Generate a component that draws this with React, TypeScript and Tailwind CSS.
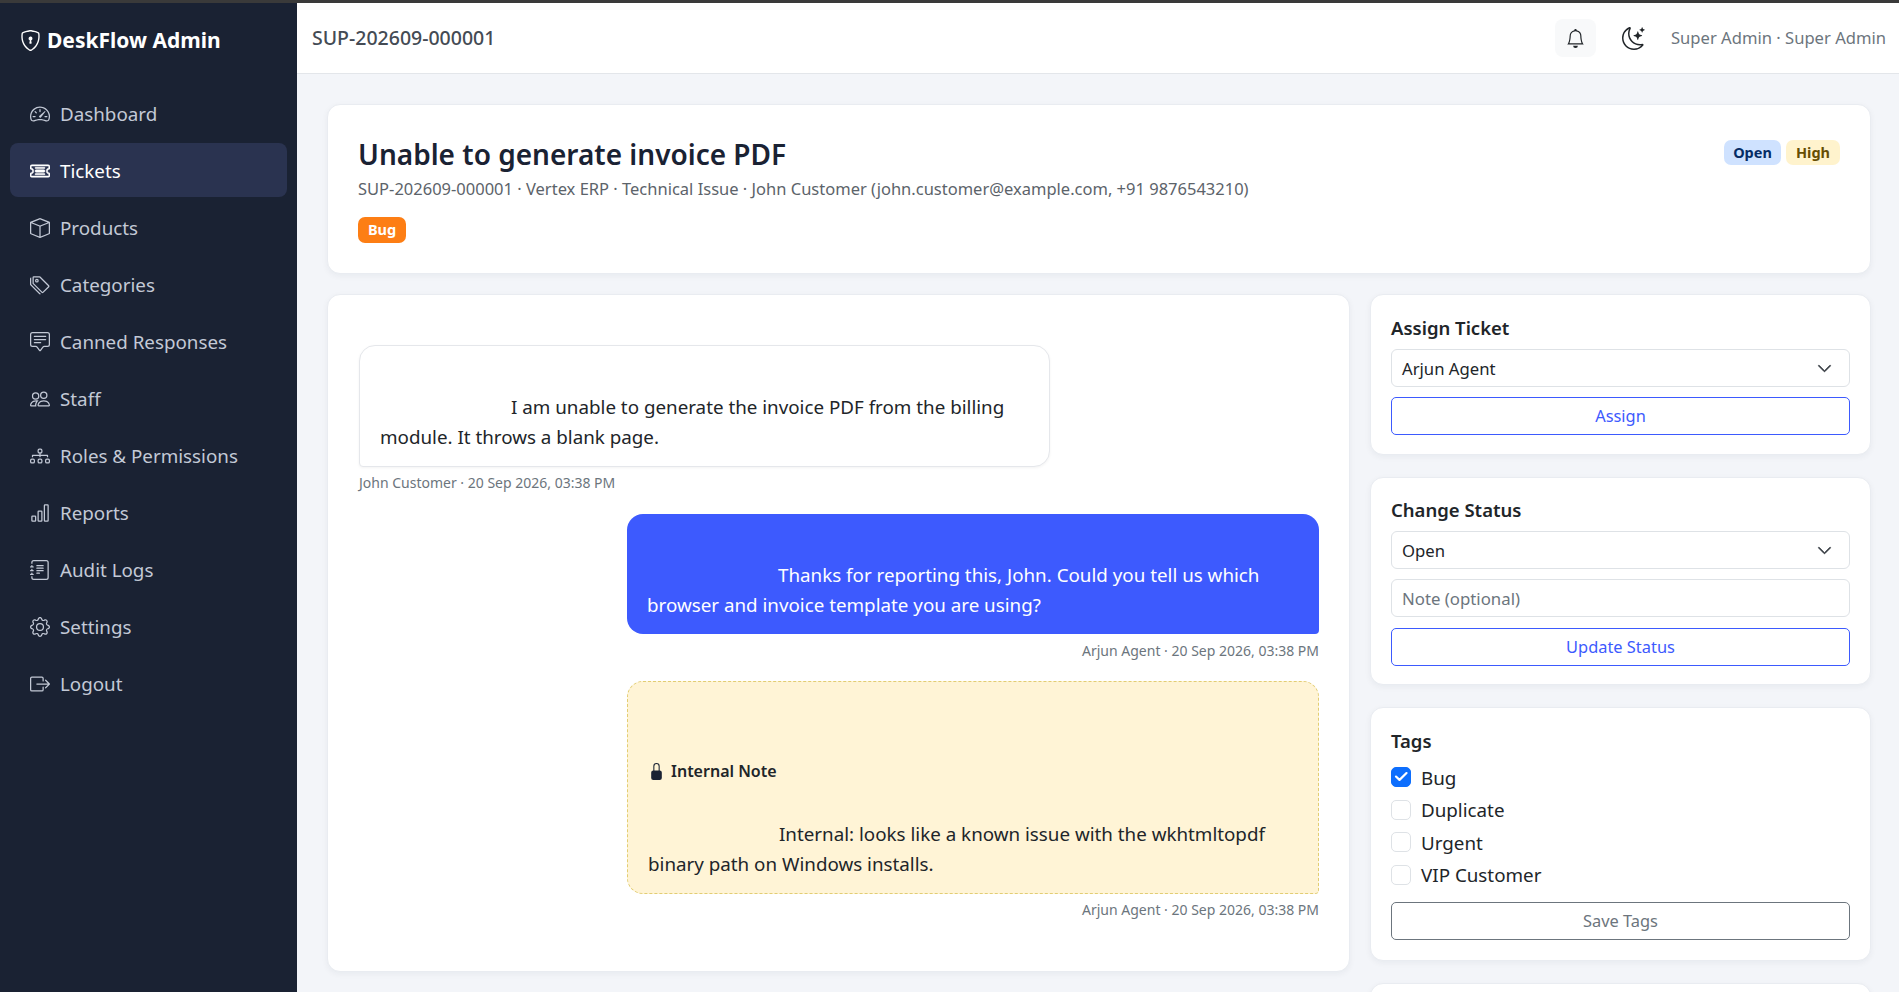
import React from "react";
import {
  BsBarChart, BsBell, BsBox, BsBoxArrowRight, BsChatSquareText, BsCheck2, BsChevronDown, BsDiagram3, BsGear,
  BsJournalText, BsLockFill, BsMoonStars, BsPeople, BsShieldLock, BsSpeedometer2, BsTags, BsTicketDetailed,
} from "react-icons/bs";

const nav = [
  { label: "Dashboard", icon: BsSpeedometer2 },
  { label: "Tickets", icon: BsTicketDetailed, active: true },
  { label: "Products", icon: BsBox },
  { label: "Categories", icon: BsTags },
  { label: "Canned Responses", icon: BsChatSquareText },
  { label: "Staff", icon: BsPeople },
  { label: "Roles & Permissions", icon: BsDiagram3 },
  { label: "Reports", icon: BsBarChart },
  { label: "Audit Logs", icon: BsJournalText },
  { label: "Settings", icon: BsGear },
  { label: "Logout", icon: BsBoxArrowRight },
];

const cardCls = "rounded-[13px] border border-[#e9ecf1] bg-white shadow-[0_2px_6px_rgba(20,30,60,0.05)]";

function Sel({ value }: { value: string }) {
  return (
    <div className="flex h-[38px] items-center justify-between rounded-[6px] border border-[#dee2e6] bg-white pl-[10px] pr-[17px] text-[16.7px] text-[#212529]">
      <span className="pt-[1px]">{value}</span>
      <BsChevronDown className="size-[15px] text-[#343a40]" strokeWidth={0.8} />
    </div>
  );
}

function Btn({ children, gray }: { children: React.ReactNode; gray?: boolean }) {
  return (
    <button className={`h-[38px] w-full rounded-[5px] border bg-white pt-[1px] text-[16.4px] ${gray ? "border-[#6c757d] text-[#6c757d]" : "border-[#3d5afe] text-[#3d5afe]"}`}>
      {children}
    </button>
  );
}

function Tag({ label, checked }: { label: string; checked?: boolean }) {
  return (
    <div className="flex h-[32.5px] items-center gap-[10px]">
      <span className={`flex size-[20px] items-center justify-center rounded-[5px] border ${checked ? "border-[#0d6efd] bg-[#0d6efd] text-white" : "border-[#dee2e6] bg-white"}`}>
        {checked && <BsCheck2 className="size-[16px]" strokeWidth={1.2} />}
      </span>
      <span className="pt-[1px] text-[#212529]">{label}</span>
    </div>
  );
}

function Indent() {
  return <span className="inline-block w-[131px]" />;
}

export default function App() {
  return (
    <div className="flex h-[992px] flex-col overflow-hidden bg-[#f3f5f9] font-['Noto_Sans',sans-serif] text-[18.8px] text-[#212529]">
      <div className="h-[3px] shrink-0 bg-[#3a3a3a]" />
      <div className="flex min-h-0 flex-1">
        <aside className="flex w-[297px] shrink-0 flex-col bg-[#1a2233]">
          <div className="flex h-[75px] items-center gap-[6px] pl-[20px] text-[21px] font-bold text-white">
            <BsShieldLock className="size-[21px]" />
            <span>DeskFlow Admin</span>
          </div>
          <nav className="flex flex-col gap-[3px] px-[10px] pt-[8px]">
            {nav.map(({ label, icon: Icon, active }) => (
              <a key={label} className={`flex h-[54px] items-center gap-[10px] rounded-[8px] pl-[20px] pt-[2px] ${active ? "bg-[#2a3350] text-white" : "text-[#c3c9d6]"}`}>
                <Icon className="size-[20px]" strokeWidth={active ? 0.4 : 0} />
                <span>{label}</span>
              </a>
            ))}
          </nav>
        </aside>
        <div className="flex min-w-0 flex-1 flex-col">
          <header className="flex h-[71px] shrink-0 items-center border-b border-[#e3e6ea] bg-white pl-[15px] pr-[13px]">
            <span className="text-[19.5px] font-medium text-[#444b54]">SUP-202609-000001</span>
            <div className="ml-auto flex items-center">
              <span className="flex h-[38px] w-[41px] items-center justify-center rounded-[8px] bg-[#f8f9fa] text-[#212529]">
                <BsBell className="size-[19px]" />
              </span>
              <BsMoonStars className="ml-[26px] size-[23px] text-[#212529]" />
              <span className="ml-[26px] text-[16.6px] text-[#6c757d]">Super Admin · Super Admin</span>
            </div>
          </header>
          <main className="flex min-h-0 flex-1 flex-col gap-[20px] overflow-hidden pl-[30px] pr-[28px] pt-[30px]">
            <section className={`${cardCls} flex h-[170px] shrink-0 items-start justify-between pl-[30px] pr-[30px] pt-[30px]`}>
              <div>
                <h1 className="text-[28px] leading-[38px] font-semibold text-[#1a2233]">Unable to generate invoice PDF</h1>
                <p className="mt-[3px] text-[16.5px] leading-[26px] text-[#5c636a]">
                  SUP-202609-000001 · Vertex ERP · Technical Issue · John Customer (john.customer@example.com, +91 9876543210)
                </p>
                <span className="mt-[15px] inline-flex h-[26px] w-[48px] items-center justify-center rounded-[7px] bg-[#fd7e14] text-[14.5px] font-bold text-white">Bug</span>
              </div>
              <div className="flex gap-[5px] pt-[5px] text-[14.5px] font-bold">
                <span className="flex h-[25px] w-[57px] items-center justify-center rounded-[7px] bg-[#cfe2ff] text-[#052c65]">Open</span>
                <span className="flex h-[25px] w-[54px] items-center justify-center rounded-[7px] bg-[#fff3cd] text-[#664d03]">High</span>
              </div>
            </section>
            <div className="flex items-start gap-[20px]">
              <section className={`${cardCls} h-[678px] w-[1023px] shrink-0 pl-[31px] pr-[30px] pt-[50px]`}>
                <div className="w-[691px] rounded-[16px] rounded-bl-[4px] border border-[#e5e7eb] bg-white px-[20px] pb-[14px] pt-[16px] leading-[30px] text-[#212529] shadow-[0_1px_3px_rgba(0,0,0,0.05)]">
                  <br />
                  <Indent />I am unable to generate the invoice PDF from the billing module. It throws a blank page.
                </div>
                <p className="mt-[6px] text-[14px] leading-[20px] text-[#6c757d]">John Customer · 20 Sep 2026, 03:38 PM</p>
                <div className="ml-auto mt-[21px] w-[692px] rounded-[16px] rounded-br-[4px] bg-[#3d5afe] px-[20px] pb-[14px] pt-[16px] leading-[30px] text-white">
                  <br />
                  <Indent />Thanks for reporting this, John. Could you tell us which browser and invoice template you are using?
                </div>
                <p className="mt-[7px] text-right text-[14px] leading-[20px] text-[#6c757d]">Arjun Agent · 20 Sep 2026, 03:38 PM</p>
                <div className="ml-auto mt-[20px] w-[692px] rounded-[16px] rounded-br-[4px] border border-dashed border-[#e2cd73] bg-[#fff4d6] px-[20px] pb-[14px] pt-[74px] leading-[30px] text-[#212529]">
                  <div className="flex h-[30px] items-center gap-[6px] text-[16px] font-semibold">
                    <BsLockFill className="size-[17px] text-[#1a2233]" />
                    Internal Note
                  </div>
                  <div className="mt-[33px]">
                    <Indent />Internal: looks like a known issue with the wkhtmltopdf binary path on Windows installs.
                  </div>
                </div>
                <p className="mt-[6px] text-right text-[14px] leading-[20px] text-[#6c757d]">Arjun Agent · 20 Sep 2026, 03:38 PM</p>
              </section>
              <aside className="flex w-[501px] shrink-0 flex-col gap-[22px]">
                <section className={`${cardCls} flex h-[161px] flex-col pl-[20px] pr-[20px] pt-[18px]`}>
                  <h2 className="h-[36px] text-[18.5px] leading-[30px] font-semibold">Assign Ticket</h2>
                  <Sel value="Arjun Agent" />
                  <div className="mt-[10px]"><Btn>Assign</Btn></div>
                </section>
                <section className={`${cardCls} flex h-[208px] flex-col pl-[20px] pr-[20px] pt-[17px]`}>
                  <h2 className="h-[36px] text-[18.5px] leading-[30px] font-semibold">Change Status</h2>
                  <Sel value="Open" />
                  <input className="mt-[10px] h-[38px] rounded-[6px] border border-[#dee2e6] bg-white px-[10px] pt-[1px] text-[16.8px] placeholder:text-[#6c757d]" placeholder="Note (optional)" />
                  <div className="mt-[11px]"><Btn>Update Status</Btn></div>
                </section>
                <section className={`${cardCls} flex h-[254px] flex-col pl-[20px] pr-[20px] pt-[18px]`}>
                  <h2 className="h-[35px] text-[18.5px] leading-[30px] font-semibold">Tags</h2>
                  <Tag label="Bug" checked />
                  <Tag label="Duplicate" />
                  <Tag label="Urgent" />
                  <Tag label="VIP Customer" />
                  <div className="mt-[11px]"><Btn gray>Save Tags</Btn></div>
                </section>
                <section className={`${cardCls} h-[100px]`} />
              </aside>
            </div>
          </main>
        </div>
      </div>
    </div>
  );
}
